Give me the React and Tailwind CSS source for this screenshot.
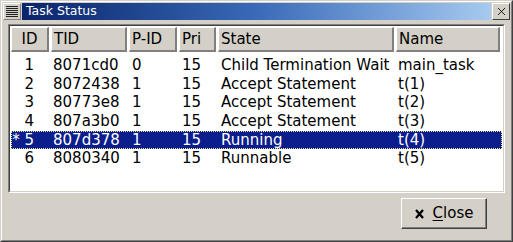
import { X } from "lucide-react";

const tasks = [
  { id: "1", tid: "8071cd0", pid: "0", pri: "15", state: "Child Termination Wait", name: "main_task" },
  { id: "2", tid: "8072438", pid: "1", pri: "15", state: "Accept Statement", name: "t(1)" },
  { id: "3", tid: "80773e8", pid: "1", pri: "15", state: "Accept Statement", name: "t(2)" },
  { id: "4", tid: "807a3b0", pid: "1", pri: "15", state: "Accept Statement", name: "t(3)" },
  { id: "* 5", tid: "807d378", pid: "1", pri: "15", state: "Running", name: "t(4)", selected: true },
  { id: "6", tid: "8080340", pid: "1", pri: "15", state: "Runnable", name: "t(5)" },
];

const cols = "grid grid-cols-[40px_78px_50px_39px_178px_1fr]";

const HeaderCell = ({ children, center }) => (
  <div
    className={`h-[25px] flex items-center ${center ? "justify-center" : "pl-[2px]"} bg-[#d4d0c8] border-t border-l border-t-white border-l-white border-r-2 border-b-2 border-r-[#808080] border-b-[#808080] mr-[2px]`}
  >
    {children}
  </div>
);

const App = () => {
  return (
    <div
      className="w-[513px] h-[242px] bg-[#d4d0c8] border border-t-[#d4d0c8] border-l-[#d4d0c8] border-r-[#404040] border-b-[#404040] text-black"
      style={{ fontFamily: '"DejaVu Sans", Verdana, sans-serif' }}
    >
      <div className="h-full flex flex-col border border-t-white border-l-white border-r-[#808080] border-b-[#808080] p-[1px]">
        {/* title bar */}
        <div className="h-[17px] flex items-stretch gap-[1px]">
          <div className="w-[18px] bg-[#d4d0c8] flex flex-col justify-center gap-[1px] px-[2px] border border-white border-r-[#808080] border-b-[#808080]">
            {[0, 1, 2, 3, 4, 5].map((i) => (
              <div key={i} className="h-[1px] bg-[#202020]" />
            ))}
          </div>
          <div className="flex-1 flex items-center pl-[4px] text-[12.5px] text-white bg-gradient-to-r from-[#0a246a] via-[#3a6ab8] to-[#a6caf0]">
            Task Status
          </div>
          <div className="w-[18px] bg-[#d4d0c8] flex items-center justify-center border border-t-white border-l-white border-r-[#404040] border-b-[#404040]">
            <X size={13} strokeWidth={1.6} className="text-black" />
          </div>
        </div>

        {/* table */}
        <div className="mx-[5px] mt-[4px] h-[169px] border border-t-[#808080] border-l-[#808080] border-r-white border-b-white">
          <div className="h-full bg-white border border-t-[#404040] border-l-[#404040] border-r-[#d4d0c8] border-b-[#d4d0c8] px-[1px] pt-[1px] text-[15px] leading-none">
            <div className={cols}>
              <HeaderCell center>ID</HeaderCell>
              <HeaderCell>TID</HeaderCell>
              <HeaderCell>P-ID</HeaderCell>
              <HeaderCell>Pri</HeaderCell>
              <HeaderCell>State</HeaderCell>
              <HeaderCell>Name</HeaderCell>
            </div>
            <div className="pt-[4px]">
              {tasks.map((t) => (
                <div
                  key={t.tid}
                  className={`${cols} h-[18.7px] items-center ${
                    t.selected ? "bg-[#0b1e8c] text-white outline-1 outline-dotted outline-[#e8e0a0] -outline-offset-1" : ""
                  }`}
                >
                  <div className="text-right pr-[17px] whitespace-pre">{t.id}</div>
                  <div className="pl-[2px]">{t.tid}</div>
                  <div className="pl-[3px]">{t.pid}</div>
                  <div className="pl-[3px]">{t.pri}</div>
                  <div className="pl-[3px] whitespace-nowrap">{t.state}</div>
                  <div className="pl-[2px] whitespace-nowrap">{t.name}</div>
                </div>
              ))}
            </div>
          </div>
        </div>

        {/* footer */}
        <div className="flex-1 flex justify-end items-start pt-[5px] pr-[23px]">
          <button className="w-[86px] h-[31px] bg-[#d4d0c8] flex items-center justify-center gap-[9px] text-[15px] border border-t-white border-l-white border-r-[#404040] border-b-[#404040] shadow-[inset_-1px_-1px_0_#808080]">
            <svg width="9" height="10" viewBox="0 0 9 10" className="mt-[1px]">
              <path d="M1 1 L8 9 M8 1 L1 9" stroke="#000" strokeWidth="2.3" strokeLinecap="butt" />
            </svg>
            <span>
              <span className="underline underline-offset-2">C</span>lose
            </span>
          </button>
        </div>
      </div>
    </div>
  );
};

export default App;
